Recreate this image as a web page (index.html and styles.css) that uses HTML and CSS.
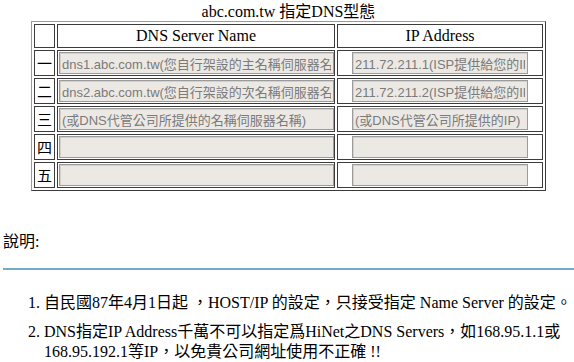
FILE: index.html
```html
<!DOCTYPE html>
<html lang="zh-Hant">
<head>
<meta charset="utf-8">
<title>指定DNS型態</title>
<link rel="stylesheet" href="styles.css">
</head>
<body>
<div class="wrap">
  <div class="title">abc.com.tw 指定DNS型態</div>
  <table class="dns">
    <tr class="head">
      <td class="num"></td>
      <td class="name">DNS Server Name</td>
      <td class="ip">IP Address</td>
    </tr>
    <tr>
      <td class="num">一</td>
      <td class="name"><input class="fname" type="text" value="dns1.abc.com.tw(您自行架設的主名稱伺服器名稱)" readonly></td>
      <td class="ip"><input class="fip" type="text" value="211.72.211.1(ISP提供給您的IP)" readonly></td>
    </tr>
    <tr>
      <td class="num">二</td>
      <td class="name"><input class="fname" type="text" value="dns2.abc.com.tw(您自行架設的次名稱伺服器名稱)" readonly></td>
      <td class="ip"><input class="fip" type="text" value="211.72.211.2(ISP提供給您的IP)" readonly></td>
    </tr>
    <tr>
      <td class="num">三</td>
      <td class="name"><input class="fname" type="text" value="(或DNS代管公司所提供的名稱伺服器名稱)" readonly></td>
      <td class="ip"><input class="fip" type="text" value="(或DNS代管公司所提供的IP)" readonly></td>
    </tr>
    <tr>
      <td class="num">四</td>
      <td class="name"><input class="fname" type="text" value="" readonly></td>
      <td class="ip"><input class="fip" type="text" value="" readonly></td>
    </tr>
    <tr>
      <td class="num">五</td>
      <td class="name"><input class="fname" type="text" value="" readonly></td>
      <td class="ip"><input class="fip" type="text" value="" readonly></td>
    </tr>
  </table>
</div>
<div class="label">說明:</div>
<div class="rule"></div>
<ol class="notes">
  <li class="one">自民國87年4月1日起 ，HOST/IP 的設定，只接受指定 Name Server 的設定。</li>
  <li>DNS指定IP Address千萬不可以指定爲HiNet之DNS Servers，如168.95.1.1或<br>168.95.192.1等IP，以免貴公司網址使用不正確 !!</li>
</ol>
</body>
</html>
```

FILE: styles.css
```css
html, body {
  margin: 0;
  padding: 0;
  background: #ffffff;
}
body {
  font-family: "Liberation Serif", "Noto Sans CJK TC", serif;
  font-size: 16px;
  color: #000;
  width: 574px;
  height: 362px;
  overflow: hidden;
}
.wrap {
  width: 515px;
  margin-left: 31px;
}
.title {
  text-align: center;
  height: 19px;
  line-height: 19px;
  padding-top: 2px;
  white-space: nowrap;
}
.dns {
  width: 515px;
  border-collapse: separate;
  border-spacing: 2px;
  border-style: solid;
  border-width: 1px;
  border-color: #9a9a9a #3a3a3a #3a3a3a #9a9a9a;
  table-layout: fixed;
}
.dns td {
  border: 1px solid #3c3c3c;
  padding: 1px;
  height: 22px;
  box-sizing: border-box;
  vertical-align: middle;
}
.dns tr.head td {
  height: 24px;
  text-align: center;
  line-height: 20px;
  padding: 0 1px;
}
.dns tr:not(.head) td {
  height: 26px;
}
.dns td.num {
  width: 21px;
  text-align: center;
  padding: 0;
  line-height: 20px;
  font-family: "Noto Sans CJK TC", serif;
  font-size: 15px;
}
.dns td.name {
  width: 278px;
}
.dns td.ip {
  text-align: center;
}
.dns input {
  display: block;
  box-sizing: border-box;
  height: 22px;
  margin: 0;
  padding: 0 2px;
  border: 1px solid #9b9b9b;
  box-shadow: inset 1px 1px 0 #d4d0c8;
  background: #ece9e5;
  color: #7a7a7a;
  font-family: "Liberation Sans", "Noto Sans CJK TC", sans-serif;
  font-size: 13px;
  outline: none;
}
.dns input.fname {
  width: 275px;
}
.dns input.fip {
  width: 176px;
  margin: 0 auto;
}
.label {
  margin-top: 41px;
  padding-left: 3px;
  height: 20px;
  line-height: 20px;
}
.rule {
  margin: 16px 0 0 3px;
  height: 2px;
  background: #73aac6;
}
.notes {
  margin: 23px 0 0 0;
  padding-left: 44px;
  line-height: 20px;
}
.notes li {
  margin-bottom: 9px;
}
.notes li.one {
  white-space: nowrap;
}
```
